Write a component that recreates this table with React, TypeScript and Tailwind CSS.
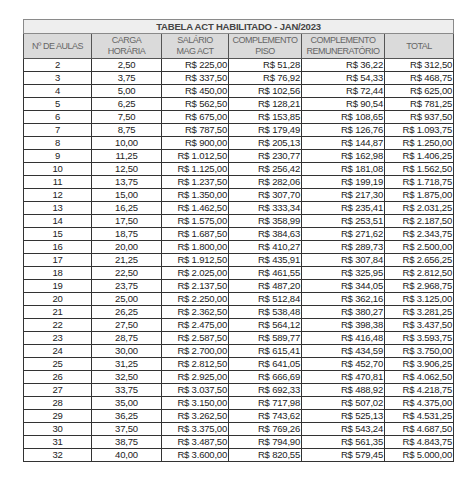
import React from "react";

const rows: [number, string, string, string, string, string][] = [
  [2, "2,50", "225,00", "51,28", "36,22", "312,50"],
  [3, "3,75", "337,50", "76,92", "54,33", "468,75"],
  [4, "5,00", "450,00", "102,56", "72,44", "625,00"],
  [5, "6,25", "562,50", "128,21", "90,54", "781,25"],
  [6, "7,50", "675,00", "153,85", "108,65", "937,50"],
  [7, "8,75", "787,50", "179,49", "126,76", "1.093,75"],
  [8, "10,00", "900,00", "205,13", "144,87", "1.250,00"],
  [9, "11,25", "1.012,50", "230,77", "162,98", "1.406,25"],
  [10, "12,50", "1.125,00", "256,42", "181,08", "1.562,50"],
  [11, "13,75", "1.237,50", "282,06", "199,19", "1.718,75"],
  [12, "15,00", "1.350,00", "307,70", "217,30", "1.875,00"],
  [13, "16,25", "1.462,50", "333,34", "235,41", "2.031,25"],
  [14, "17,50", "1.575,00", "358,99", "253,51", "2.187,50"],
  [15, "18,75", "1.687,50", "384,63", "271,62", "2.343,75"],
  [16, "20,00", "1.800,00", "410,27", "289,73", "2.500,00"],
  [17, "21,25", "1.912,50", "435,91", "307,84", "2.656,25"],
  [18, "22,50", "2.025,00", "461,55", "325,95", "2.812,50"],
  [19, "23,75", "2.137,50", "487,20", "344,05", "2.968,75"],
  [20, "25,00", "2.250,00", "512,84", "362,16", "3.125,00"],
  [21, "26,25", "2.362,50", "538,48", "380,27", "3.281,25"],
  [22, "27,50", "2.475,00", "564,12", "398,38", "3.437,50"],
  [23, "28,75", "2.587,50", "589,77", "416,48", "3.593,75"],
  [24, "30,00", "2.700,00", "615,41", "434,59", "3.750,00"],
  [25, "31,25", "2.812,50", "641,05", "452,70", "3.906,25"],
  [26, "32,50", "2.925,00", "666,69", "470,81", "4.062,50"],
  [27, "33,75", "3.037,50", "692,33", "488,92", "4.218,75"],
  [28, "35,00", "3.150,00", "717,98", "507,02", "4.375,00"],
  [29, "36,25", "3.262,50", "743,62", "525,13", "4.531,25"],
  [30, "37,50", "3.375,00", "769,26", "543,24", "4.687,50"],
  [31, "38,75", "3.487,50", "794,90", "561,35", "4.843,75"],
  [32, "40,00", "3.600,00", "820,55", "579,45", "5.000,00"],
];

export default function App() {
  return (
    <div
      className="w-[474px] h-[500px] bg-white pt-[19px] pl-[23px]"
      style={{ fontFamily: '"Liberation Sans", Arial, sans-serif' }}
    >
      <table className="table-fixed border-collapse w-[430px] text-[#222] text-[9.5px] tracking-[-0.2px] leading-none">
        <colgroup>
          <col className="w-[68px]" />
          <col className="w-[70px]" />
          <col className="w-[67px]" />
          <col className="w-[73px]" />
          <col className="w-[83px]" />
          <col className="w-[69px]" />
        </colgroup>
        <thead>
          <tr className="h-[14px]">
            <th
              colSpan={6}
              className="border border-[#8a8a8a] bg-[#eeeeee] text-[#444] font-bold text-[9.5px] text-center p-0"
            >
              TABELA ACT HABILITADO - JAN/2023
            </th>
          </tr>
          <tr className="h-[25px] bg-[#dadada] text-[#666] text-[9px] tracking-[-0.5px]">
            <th className="border border-[#555] font-normal text-center p-0">Nº DE AULAS</th>
            <th className="border border-[#555] font-normal text-center p-0 leading-[11px]">
              CARGA
              <br />
              HORÁRIA
            </th>
            <th className="border border-[#555] font-normal text-center p-0 leading-[11px]">
              SALÁRIO
              <br />
              MAG ACT
            </th>
            <th className="border border-[#555] font-normal text-center p-0 leading-[11px]">
              COMPLEMENTO
              <br />
              PISO
            </th>
            <th className="border border-[#555] font-normal text-center p-0 leading-[11px]">
              COMPLEMENTO
              <br />
              REMUNERATÓRIO
            </th>
            <th className="border border-[#555] font-normal text-center p-0">TOTAL</th>
          </tr>
        </thead>
        <tbody>
          {rows.map((r) => (
            <tr key={r[0]} className="h-[13px]">
              <td className="border border-[#333] text-center p-0">{r[0]}</td>
              <td className="border border-[#333] text-center p-0">{r[1]}</td>
              <td className="border border-[#333] text-right p-0 pr-[1px]">R$ {r[2]}</td>
              <td className="border border-[#333] text-right p-0 pr-[1px]">R$ {r[3]}</td>
              <td className="border border-[#333] text-right p-0 pr-[1px]">R$ {r[4]}</td>
              <td className="border border-[#333] text-right p-0 pr-[1px]">R$ {r[5]}</td>
            </tr>
          ))}
        </tbody>
      </table>
    </div>
  );
}
